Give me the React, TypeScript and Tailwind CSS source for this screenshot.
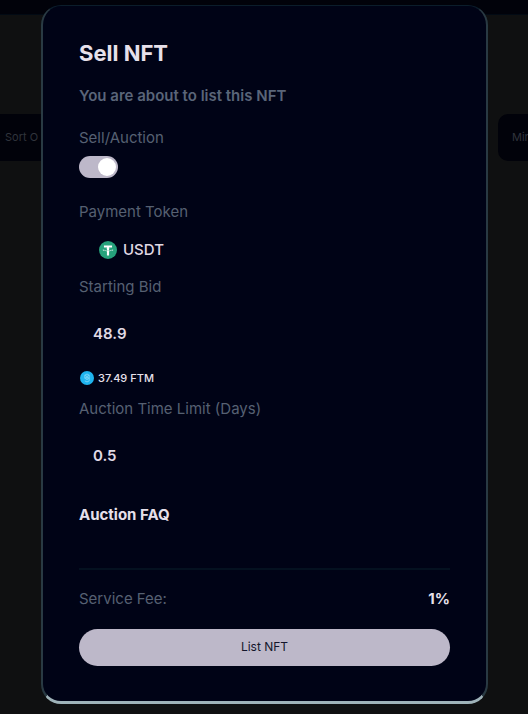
import { useState } from "react";

function TetherIcon() {
  return (
    <svg viewBox="0 0 32 32" className="size-[18px] shrink-0" aria-hidden="true">
      <circle cx="16" cy="16" r="16" fill="#26a17b" />
      <path
        fill="#fff"
        d="M17.9 17.4v0c-.1 0-.7.1-1.9.1-1 0-1.6 0-1.900-.1-3.800-.2-6.600-.8-6.600-1.700s2.800-1.500 6.600-1.700v2.700c.2 0 1 .1 1.900.1 1.200 0 1.700 0 1.900-.1V14c3.800.2 6.600.8 6.600 1.700s-2.800 1.500-6.600 1.700m0-3.600v-2.300h5.300V7.900H8.800v3.600h5.300v2.300c-4.300.2-7.500 1.100-7.500 2.100s3.200 1.900 7.500 2.100v7.600h3.800V18c4.300-.2 7.500-1 7.500-2.100s-3.200-1.900-7.500-2.100"
      />
    </svg>
  );
}

function FantomIcon() {
  return (
    <svg viewBox="0 0 32 32" className="size-[14px] shrink-0" aria-hidden="true">
      <circle cx="16" cy="16" r="16" fill="#1fb4ee" />
      <path
        fill="none"
        stroke="#7fd6f7"
        strokeWidth="2"
        strokeLinejoin="round"
        d="M11 9.500 16 7l5 2.500v13L16 25l-5-2.500M11 9.500l5 3 5-3M11 9.500v7l5 3 5-3-5-3-5 3M16 12.500v7"
      />
    </svg>
  );
}

const label = "block text-[15px] leading-6 text-[#566072]";
const field =
  "mt-[10px] block h-12 w-full bg-transparent px-[14px] text-[15px] font-semibold text-[#e0dae4] outline-none";

export default function App() {
  const [auction, setAuction] = useState(true);
  const [bid, setBid] = useState("48.9");
  const [days, setDays] = useState("0.5");

  return (
    <div className="relative min-h-screen overflow-hidden bg-[#0f1011] font-['Inter','Liberation_Sans',sans-serif]">
      <div className="h-[15px] border-b border-[#020a14] bg-[#01020a]" />
      <div className="mt-[99px] flex justify-between text-[11px] text-[#30343c]">
        <button className="h-[47px] w-24 bg-[#01020a] pl-[5px] text-left">Sort O</button>
        <button className="h-[47px] w-[30px] overflow-hidden rounded-l-[10px] bg-[#01020a] pl-[14px] text-left">
          Min
        </button>
      </div>

      <div className="absolute inset-0 flex items-start justify-center pt-[5px] pr-10 pl-[41px]">
        <section
          role="dialog"
          aria-labelledby="sell-title"
          className="w-full max-w-[447px] rounded-[20px] border-x-2 border-t border-b-[3px] border-x-[#293a43] border-t-[#0b1d2b] border-b-[#9fb3b9] bg-[#000316] px-9 pt-[31px] pb-[35px]"
        >
          <h1 id="sell-title" className="text-[22px] leading-8 font-bold text-[#e6e0ea]">
            Sell NFT
          </h1>
          <p className="mt-[15px] text-[15px] leading-6 font-semibold text-[#5a6579]">
            You are about to list this NFT
          </p>

          <label htmlFor="mode" className={`${label} mt-[18px]`}>
            Sell/Auction
          </label>
          <input
            id="mode"
            type="checkbox"
            checked={auction}
            onChange={(e) => setAuction(e.target.checked)}
            className="mt-[6px] flex h-[22px] w-[39px] appearance-none items-center rounded-full bg-[#bdb8c9] px-[2px] before:block before:size-[18px] before:rounded-full before:bg-white checked:justify-end"
          />

          <label htmlFor="token" className={`${label} mt-[22px]`}>
            Payment Token
          </label>
          <div className="mt-2 flex h-9 items-center gap-[6px] pl-5">
            <TetherIcon />
            <select
              id="token"
              className="grow appearance-none bg-transparent text-[15px] font-medium text-[#e0dae4] outline-none"
            >
              <option>USDT</option>
            </select>
          </div>

          <label htmlFor="bid" className={`${label} mt-[7px]`}>
            Starting Bid
          </label>
          <input id="bid" type="text" value={bid} onChange={(e) => setBid(e.target.value)} className={field} />
          <div className="mt-[13px] flex h-4 items-center gap-1 pl-px text-[11px] font-medium text-[#e6e0ea]">
            <FantomIcon />
            37.49 FTM
          </div>

          <label htmlFor="days" className={`${label} mt-[11px]`}>
            Auction Time Limit (Days)
          </label>
          <input id="days" type="text" value={days} onChange={(e) => setDays(e.target.value)} className={field} />

          <h2 className="mt-6 text-[15px] leading-6 font-bold text-[#e6e0ea]">Auction FAQ</h2>

          <hr className="mt-[41px] border-t-2 border-[#041120]" />
          <div className="mt-[17px] flex items-center justify-between">
            <span className={label}>Service Fee:</span>
            <span className="text-[15px] leading-6 font-bold text-[#e6e0ea]">1%</span>
          </div>
          <button className="mt-[18px] h-[37px] w-full rounded-full bg-[#bdb8c9] pb-[2px] text-[12px] text-[#14162b]">
            List NFT
          </button>
        </section>
      </div>
    </div>
  );
}
